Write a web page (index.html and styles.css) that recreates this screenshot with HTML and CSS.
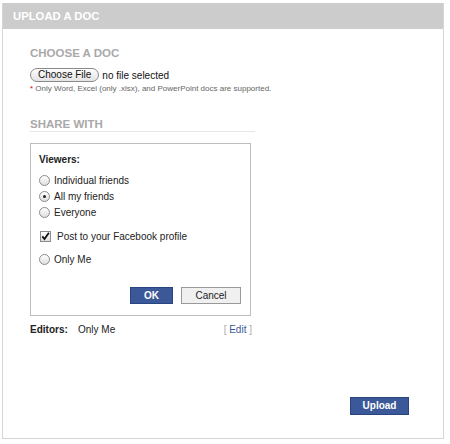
FILE: index.html
```html
<!DOCTYPE html>
<html>
<head>
<meta charset="utf-8">
<link rel="stylesheet" href="styles.css">
</head>
<body>
<div class="dialog">
  <div class="header">UPLOAD A DOC</div>
  <div class="content">
    <div class="section-title">CHOOSE A DOC</div>
    <div class="file-row">
      <span class="file-btn">Choose File</span>
      <span class="file-name">no file selected</span>
    </div>
    <div class="note"><span class="star">*</span> Only Word, Excel (only .xlsx), and PowerPoint docs are supported.</div>

    <div class="section-title share">SHARE WITH</div>

    <div class="privacy-box">
      <div class="viewers">Viewers:</div>
      <div class="opt first"><span class="radio"></span>Individual friends</div>
      <div class="opt"><span class="radio checked"></span>All my friends</div>
      <div class="opt"><span class="radio"></span>Everyone</div>
      <div class="opt check-opt"><span class="checkbox"><svg width="9" height="9" viewBox="0 0 9 9"><path d="M1.3 4.4 L3.5 7 L7.9 0.8" fill="none" stroke="#111" stroke-width="1.8"/></svg></span>Post to your Facebook profile</div>
      <div class="opt only-me"><span class="radio"></span>Only Me</div>
      <div class="box-buttons">
        <span class="btn btn-blue">OK</span>
        <span class="btn btn-gray">Cancel</span>
      </div>
    </div>

    <div class="editors">
      <span class="ed-label">Editors:</span>
      <span class="ed-value">Only Me</span>
      <span class="ed-edit">[ <a>Edit</a> ]</span>
    </div>
  </div>
  <div class="footer">
    <span class="btn btn-blue upload">Upload</span>
  </div>
</div>
</body>
</html>
```
FILE: styles.css
```css
html, body {
  margin: 0;
  padding: 0;
  background: #fff;
}
body {
  font-family: "Liberation Sans", Arial, sans-serif;
  font-size: 10px;
  color: #222;
}
.dialog {
  box-sizing: border-box;
  margin: 3px 0 0 2px;
  width: 442px;
  height: 436px;
  border: 1px solid #d6d6d6;
  border-top: none;
  display: flex;
  flex-direction: column;
}
.header {
  height: 26px;
  background: #cccccc;
  color: #fff;
  font-weight: bold;
  font-size: 11.3px;
  line-height: 27px;
  padding-left: 10px;
}
.content {
  padding: 17px 0 0 27px;
  flex: 1;
}
.section-title {
  color: #a9a9a9;
  font-weight: bold;
  font-size: 11.5px;
  line-height: 14px;
}
.file-row {
  margin-top: 8px;
  display: flex;
  align-items: center;
  gap: 3px;
  height: 14px;
}
.file-btn {
  box-sizing: border-box;
  height: 14px;
  line-height: 12px;
  padding: 0 7px;
  border: 1px solid #8a8a8a;
  border-radius: 7px;
  background: linear-gradient(#fdfdfd, #e4e4e4);
  color: #111;
}
.file-name {
  color: #111;
}
.note {
  margin-top: 2px;
  font-size: 8px;
  line-height: 10px;
  color: #666;
}
.star { color: #d00; }
.share {
  margin-top: 23px;
  width: 225px;
  border-bottom: 1px solid #e6e6e6;
}
.privacy-box {
  box-sizing: border-box;
  margin-top: 11px;
  width: 221px;
  height: 173px;
  border: 1px solid #bdbdbd;
  padding: 9px 8px 0 8px;
}
.viewers {
  font-weight: bold;
  line-height: 14px;
}
.opt {
  display: flex;
  align-items: center;
  height: 16px;
}
.opt.first {
  margin-top: 5px;
}
.radio {
  box-sizing: border-box;
  width: 11px;
  height: 11px;
  border-radius: 50%;
  border: 1px solid #8c8c8c;
  background: linear-gradient(#fff, #dedede);
  margin-right: 4px;
  display: inline-flex;
  align-items: center;
  justify-content: center;
}
.radio.checked::after {
  content: "";
  width: 3px;
  height: 3px;
  border-radius: 50%;
  background: #222;
}
.check-opt {
  margin-top: 8px;
}
.checkbox {
  box-sizing: border-box;
  width: 11px;
  height: 11px;
  border: 1px solid #8c8c8c;
  background: linear-gradient(#fff, #dedede);
  margin: 0 6px 0 1px;
  display: inline-flex;
  align-items: center;
  justify-content: center;
}
.only-me {
  margin-top: 7px;
}
.box-buttons {
  display: flex;
  justify-content: flex-end;
  gap: 8px;
  margin-top: 20px;
  padding-right: 1px;
}
.btn {
  box-sizing: border-box;
  height: 17px;
  line-height: 15px;
  text-align: center;
}
.btn-blue {
  background: #3b5998;
  border: 1px solid #29447e;
  color: #fff;
  font-weight: bold;
  width: 43px;
}
.btn-gray {
  background: #f0f0f0;
  border: 1px solid #999;
  color: #222;
  width: 60px;
}
.editors {
  margin-top: 7px;
  width: 222px;
  display: flex;
  line-height: 14px;
}
.ed-label {
  font-weight: bold;
  width: 48px;
}
.ed-value { flex: 1; }
.ed-edit { color: #aaa; }
.ed-edit a { color: #3b5998; }
.footer {
  display: flex;
  justify-content: flex-end;
  padding: 0 34px 23px 0;
}
.upload {
  width: 59px;
  height: 18px;
  line-height: 16px;
}
```
